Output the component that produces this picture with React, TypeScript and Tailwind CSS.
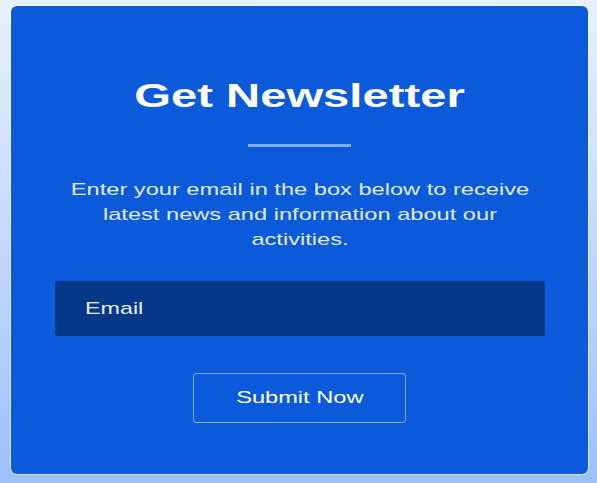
import React from 'react';

export default function App() {
  return (
    <div className="h-[483px] w-[597px] bg-gradient-to-b from-[#e9f1fd] to-[#9dc0f9] pt-[6px] pl-[11px] pr-[9px] pb-[9px] font-['Liberation_Sans',Arial,sans-serif]">
      <div className="flex h-full flex-col items-center rounded-md bg-[#0b5ad9] pt-[70px] shadow-[0_0_0_1px_rgba(255,255,255,0.55)]">
        <h1 className="inline-block scale-x-[1.43] text-[33px] leading-[40px] font-bold text-white">
          Get Newsletter
        </h1>

        <div className="mt-[28px] h-[3px] w-[103px] bg-white/50" />

        <p className="mt-[30px] w-[342px] scale-x-[1.39] text-center text-[17px] leading-[25px] text-[#e2eaf9]">
          Enter your email in the box below to receive latest news and information about our activities.
        </p>

        <div className="mt-[29px] flex h-[55px] w-[490px] items-center rounded-[3px] bg-[#063889] pl-[30px]">
          <span className="inline-block origin-left scale-x-[1.37] text-[17px] text-[#e8eefa]">Email</span>
        </div>

        <button className="mt-[37px] flex h-[50px] w-[213px] items-center justify-center rounded-[3px] border border-white/50 bg-transparent">
          <span className="inline-block scale-x-[1.39] text-[17px] text-white">Submit Now</span>
        </button>
      </div>
    </div>
  );
}
